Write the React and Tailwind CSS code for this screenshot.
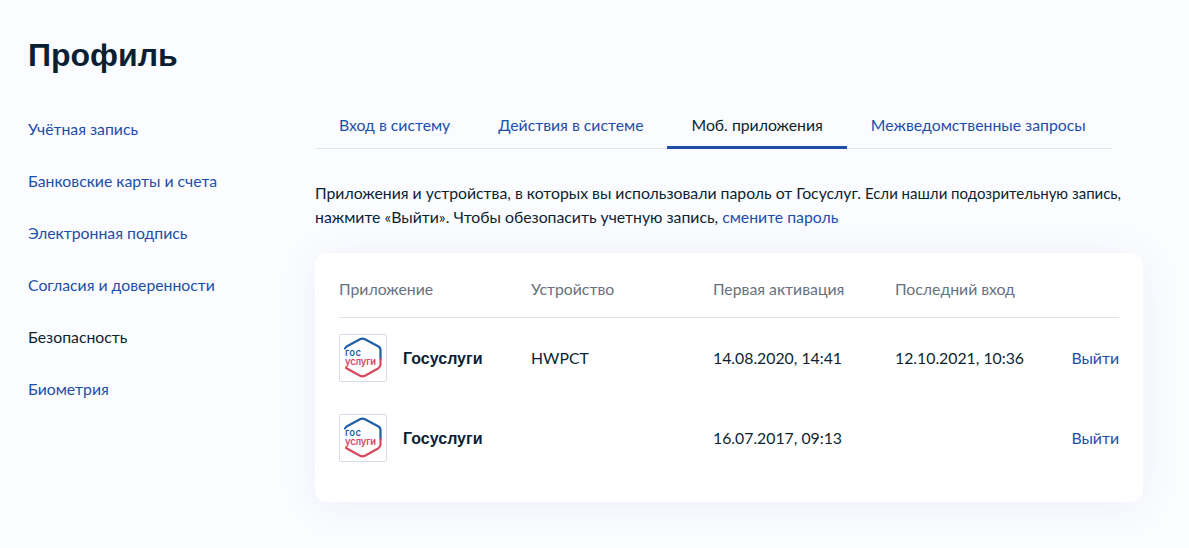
const navItems = ['Учётная запись', 'Банковские карты и счета', 'Электронная подпись', 'Согласия и доверенности', 'Безопасность', 'Биометрия'];
const tabs = ['Вход в систему', 'Действия в системе', 'Моб. приложения', 'Межведомственные запросы'];
const rows = [
  { device: 'HWPCT', first: '14.08.2020, 14:41', last: '12.10.2021, 10:36' },
  { device: '', first: '16.07.2017, 09:13', last: '' },
];

const GosLogo = () => (
  <div className="w-12 h-12 shrink-0 bg-white border border-[#d5dde8] rounded-[2px]">
    <svg width="46" height="46" viewBox="0 0 46 46" fill="none">
      <path d="M5 13.500Q5.500 12 7.500 11L20 4.300Q22.500 3 25 4.300L38 11.300Q40.500 12.500 40.500 15V24" stroke="#1f5fa8" strokeWidth="2.200" strokeLinecap="round" />
      <path d="M40.500 24V29.500Q40.500 32 38 33.500L25 40.800Q22.500 42 20 40.800L6 33" stroke="#d9485f" strokeWidth="2.200" strokeLinecap="round" />
      <text fontFamily="Inter, sans-serif" fontWeight="600" fontSize="9.500">
        <tspan x="5" y="21" letterSpacing="0.300" fill="#1f5fa8">гос</tspan>
        <tspan x="5" y="29.500" letterSpacing="-0.200" fill="#d9485f">услуги</tspan>
      </text>
    </svg>
  </div>
);

const App = () => {
  return (
    <div className="w-[1189px] h-[548px] overflow-hidden bg-[#fbfcff] font-['Lato','Noto_Sans',sans-serif] text-[15.800px] text-[#0b1f33] flex flex-col pl-7">
      <h1 className="font-['Liberation_Sans',sans-serif] font-bold text-[32px] leading-[38px] mt-[36px] text-[#0b1f33]">Профиль</h1>

      <div className="flex mt-[28px]">
        {/* Sidebar */}
        <div className="w-[287px] shrink-0 flex flex-col gap-[28px] pt-[15px]">
          {navItems.map((item) => (
            <a key={item} className={`leading-[24px] ${item === 'Безопасность' ? 'text-[#0b1f33]' : 'text-[#1d4fa8]'}`}>{item}</a>
          ))}
        </div>

        <div className="w-[828px] shrink-0">
          {/* Tabs */}
          <div className="w-[797px] flex border-b border-[#e3e8f0] h-[47px]">
            {tabs.map((tab) => (
              <div
                key={tab}
                className={`px-6 pt-[11px] h-[47px] leading-[24px] whitespace-nowrap border-b-[3px] ${tab === 'Моб. приложения' ? 'border-[#1d4fa8] text-[#0b1f33]' : 'border-transparent text-[#1d4fa8]'}`}
              >
                {tab}
              </div>
            ))}
          </div>

          <p className="mt-[32px] leading-[24px] whitespace-nowrap">
            Приложения и устройства, в которых вы использовали пароль от Госуслуг. <span className="text-[15px]">Если нашли подозрительную запись,</span>
            <br />
            нажмите «Выйти». Чтобы обезопасить учетную запись, <a className="text-[#1d4fa8]">смените пароль</a>
          </p>

          {/* Table card */}
          <div className="mt-[24px] h-[249px] bg-white rounded-xl shadow-[0_4px_40px_rgba(30,70,160,0.07)] px-6">
            <div className="flex items-center h-[65px] pt-[8px] border-b border-[#e1e1e1] text-[#66727f]">
              <div className="w-[192px]">Приложение</div>
              <div className="w-[182px]">Устройство</div>
              <div className="w-[182px]">Первая активация</div>
              <div>Последний вход</div>
            </div>
            <div className="flex flex-col gap-8 pt-4">
              {rows.map((row, i) => (
                <div key={i} className="flex items-center h-12">
                  <div className="w-[192px] flex items-center gap-4">
                    <GosLogo />
                    <span className="font-['Liberation_Sans',sans-serif] font-bold text-[16px] pt-[2px]">Госуслуги</span>
                  </div>
                  <div className="w-[182px]">{row.device}</div>
                  <div className="w-[182px]">{row.first}</div>
                  <div className="w-[150px]">{row.last}</div>
                  <a className="ml-auto text-[#1d4fa8]">Выйти</a>
                </div>
              ))}
            </div>
          </div>
        </div>
      </div>
    </div>
  );
};

export default App;
